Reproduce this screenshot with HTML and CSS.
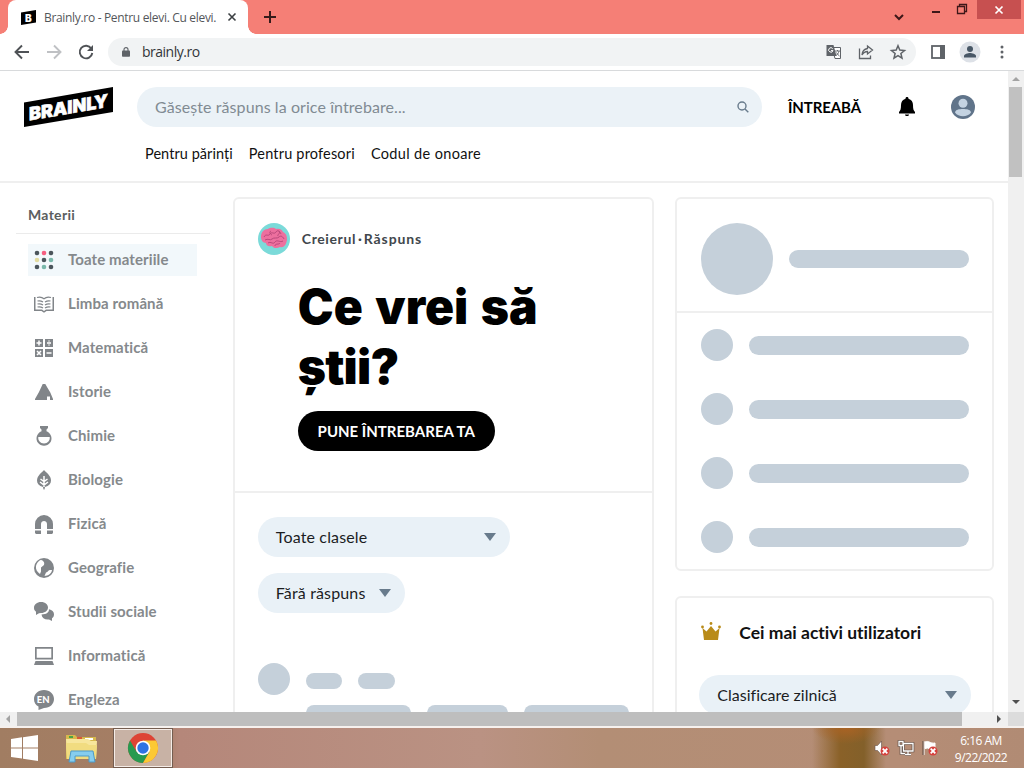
FILE: index.html
```html
<!DOCTYPE html>
<html lang="ro">
<head>
    <meta charset="UTF-8">
    <meta name="viewport" content="width=device-width, initial-scale=1.0">
    <title>Brainly.ro - Pentru elevi. Cu elevi.</title>
    <link rel="stylesheet" href="styles.css">
</head>
<body>
    <div class="tab-strip">
        <div class="tab">
            <svg class="favicon" viewBox="0 0 15 15"><path d="M0 2.5 15 0v12.5L0 15z"/><text x="4" y="11.5">B</text></svg>
            <span class="tab-title">Brainly.ro - Pentru elevi. Cu elevi.</span>
            <svg class="tab-close" viewBox="0 0 8 8"><path d="M.5.5l7 7M7.5.5l-7 7"/></svg>
        </div>
        <svg class="new-tab" viewBox="0 0 12 12"><path d="M6 0v12M0 6h12"/></svg>
        <div class="window-controls">
            <svg class="tab-search" viewBox="0 0 10 6"><path d="M1 1l4 4 4-4"/></svg>
            <span class="minimize"></span>
            <svg class="restore" viewBox="0 0 10 10"><path d="M.5 2.5h7v7h-7zM2.5 2.500V.5h7v7h-2"/></svg>
            <div class="window-close"><svg viewBox="0 0 8 8"><path d="M.5.5l7 7M7.5.5l-7 7"/></svg></div>
        </div>
    </div>

    <div class="toolbar">
        <div class="nav-buttons">
            <svg viewBox="0 0 16 16"><path d="M15 8H2M8 1.500L1.500 8 8 14.500"/></svg>
            <svg class="disabled" viewBox="0 0 16 16"><path d="M1 8h13M8 1.500L14.500 8 8 14.500"/></svg>
            <svg viewBox="0 0 16 16"><path d="M13.300 4.500A6.300 6.300 0 1 0 14.300 9"/><path class="solid" d="M15 1v6H9z"/></svg>
        </div>
        <div class="address-bar">
            <svg class="lock" viewBox="0 0 10 12"><rect y="4" width="10" height="8" rx="1"/><path d="M2.500 5V3a2.500 2.500 0 0 1 5 0v2"/></svg>
            <span class="address">brainly.ro</span>
            <div class="address-actions">
                <svg class="translate" viewBox="0 0 16 16"><path d="M6 3.500h8.500v11H9z" fill="#fff" stroke="#5f6368"/><path d="M.5 1h7l3 11H.5z" fill="#5f6368"/><path d="M6.700 4.700A2.200 2.200 0 1 0 7 6.600H5" fill="none" stroke="#fff"/><path d="M9 7h5M11.500 6v1M13 7c-.5 2.500-2 4-3 4.500M10.500 8.500c.6 1.500 2 2.800 3 3.500" fill="none" stroke="#5f6368" stroke-width=".9"/></svg>
                <svg class="share" viewBox="0 0 16 16"><path d="M1.500 4.500v10h11v-3M9.500 2l5 4-5 4V7.500C7 7.500 5.500 8.500 4 11c.3-4 2.500-6 5.500-6.500z"/></svg>
                <svg class="star" viewBox="0 0 16 16"><path d="M8 1.800l1.800 4.300 4.700.4-3.600 3 1.100 4.600-4-2.500-4 2.500 1.100-4.600-3.600-3 4.700-.4z"/></svg>
            </div>
        </div>
        <svg class="side-panel" viewBox="0 0 14 14"><rect x="1" y="1" width="12" height="12"/><path d="M9 0h5v14H9z"/></svg>
        <svg class="profile" viewBox="0 0 20 20"><circle class="back" cx="10" cy="10" r="10.500"/><circle cx="10" cy="7" r="3"/><path d="M4 15.500v-1.500c0-2 4-3 6-3s6 1 6 3v1.500z"/></svg>
        <svg class="more" viewBox="0 0 4 14"><circle cx="2" cy="2" r="1.500"/><circle cx="2" cy="7" r="1.500"/><circle cx="2" cy="12" r="1.500"/></svg>
    </div>

    <div class="viewport">
        <div class="page">
            <header class="header">
                <div class="header-top">
                    <svg class="logo" viewBox="0 0 89 40"><path d="M0 15.500 89 0v25L0 40z"/><text x="5" y="34.500" transform="matrix(1 -.174 0 1 0 0)" textLength="79" lengthAdjust="spacingAndGlyphs">BRAINLY</text></svg>
                    <div class="search">
                        <span>Găsește răspuns la orice întrebare...</span>
                        <svg viewBox="0 0 12 12"><circle cx="5" cy="5" r="4"/><path d="M8 8l3.300 3.300"/></svg>
                    </div>
                    <span class="ask-link">ÎNTREABĂ</span>
                    <svg class="bell" viewBox="0 0 16 20"><path d="M8 0c1 0 1.500.7 1.500 1.700C12.500 2.500 14 5 14 8c0 4 .5 5.500 2 7v1.500H0V15c1.500-1.500 2-3 2-7 0-3 1.500-5.500 4.500-6.300C6.500.7 7 0 8 0zM6 17.500h4c0 2-4 2-4 0z"/></svg>
                    <svg class="avatar" viewBox="0 0 24 24"><circle cx="12" cy="12" r="12" fill="#60748a"/><circle cx="12" cy="8.300" r="4.500" fill="#c4d3e2"/><path d="M4 17.500C4.500 14.500 8 14 12 14s7.500.5 8 3.500c-3.500 5-12.500 5-16 0z" fill="#c4d3e2"/></svg>
                </div>
                <nav class="header-links">
                    <a>Pentru părinți</a>
                    <a>Pentru profesori</a>
                    <a>Codul de onoare</a>
                </nav>
            </header>

            <main class="content">
                <aside class="sidebar">
                    <h2>Materii</h2>
                    <ul class="subjects">
                        <li class="active">
                            <svg viewBox="0 0 20 20"><g fill="#4b555b"><circle cx="3" cy="3" r="2.300"/><circle cx="17" cy="3" r="2.300"/><circle cx="10" cy="10" r="2.300"/><circle cx="3" cy="17" r="2.300"/><circle cx="17" cy="17" r="2.300"/></g><circle cx="10" cy="3" r="2.300" fill="#f55f80"/><circle cx="3" cy="10" r="2.300" fill="#e3dca0"/><g fill="#7ab8ab"><circle cx="17" cy="10" r="2.300"/><circle cx="10" cy="17" r="2.300"/></g></svg>
                            <span>Toate materiile</span>
                        </li>
                        <li>
                            <svg viewBox="0 0 20 20"><path d="M0 3h1.500v12.500H8l2 1.500 2-1.500h6.500V3H20v14h-7.500L10 18.700 7.500 17H0z"/><path class="line" d="M3 3.500c3-1 5-.5 7 1.200 2-1.700 4-2.200 7-1.200M3.500 7c2-.5 4 0 5.500 1M3.500 10c2-.5 4 0 5.500 1M3.500 13c2-.5 4 0 5.500 1M16.500 7c-2-.5-4 0-5.500 1M16.500 10c-2-.5-4 0-5.500 1M16.500 13c-2-.5-4 0-5.500 1"/></svg>
                            <span>Limba română</span>
                        </li>
                        <li>
                            <svg viewBox="0 0 20 20"><path d="M1 1h8v8H1zM11 1h8v8h-8zM1 11h8v8H1zM11 11h8v8h-8z"/><path class="cut" d="M5 2.500v5M2.500 5h5M3 13l4 4M7 13l-4 4M12.500 15h5M13 5h4M15 2.500v1M15 6.500v1"/></svg>
                            <span>Matematică</span>
                        </li>
                        <li>
                            <svg viewBox="0 0 20 20"><path d="M8.700 2h2.600l2 3.500 3 5 2.700 6.500v1h-3v-3.500h-3V18H1v-1l4-7z"/></svg>
                            <span>Istorie</span>
                        </li>
                        <li>
                            <svg viewBox="0 0 20 20"><path d="M6 0h8v2l-1.500 1.500v1.800a7.500 7.500 0 1 1-5 0V3.500L6 2z"/><path class="hole" d="M4.300 11h11.400c.5 3.500-2 6.500-5.700 6.500S3.800 14.500 4.300 11z"/></svg>
                            <span>Chimie</span>
                        </li>
                        <li>
                            <svg viewBox="0 0 20 20"><path d="M10 0c2 2.500 7 5.500 7 10.500 0 3-2 5.500-6 6.500l-.5 2.500h-1L9 17c-4-1-6-3.500-6-6.500C3 5.500 8 2.500 10 0z"/><path class="cut" d="M10 6v11M6.500 9l3.500 2.500L13.500 9M6 12l4 3 4-3"/></svg>
                            <span>Biologie</span>
                        </li>
                        <li>
                            <svg viewBox="0 0 20 20"><path d="M1 15v-5a9 9 0 0 1 18 0v5h-6v-5c0-4-6-4-6 0v5zM1 16.500h6V20H2l-1-1zM13 16.500h6V19l-1 1h-5z"/></svg>
                            <span>Fizică</span>
                        </li>
                        <li>
                            <svg viewBox="0 0 20 20"><circle cx="10" cy="10" r="10"/><path class="hole" d="M7 1.700c2 1 4 2.300 3 5.300l-3 2.500v4l-1 2.500C3 14 1.500 11 2 8s2.500-5.300 5-6.300zM18 12c0 3-4 6-7.500 6l1.500-3.500c2-.5 2.500-2.500 4-2.500z"/></svg>
                            <span>Geografie</span>
                        </li>
                        <li>
                            <svg viewBox="0 0 20 20"><path d="M7 0c4.500 0 7 2.500 7 5.500S11 11 7 11l-2 .2L2 13v-3.200C.5 8.500 0 7.500 0 5.800 0 2.500 3 0 7 0z"/><path d="M15 7.300c3 .5 5 2.700 5 5 0 2-.7 3-2 4V19l-3-1.500c-4 .5-7-1.300-7.500-5 5 0 7.500-2 7.500-5.200z"/></svg>
                            <span>Studii sociale</span>
                        </li>
                        <li>
                            <svg viewBox="0 0 20 20"><path fill-rule="evenodd" d="M1 1h18v12.500H1zM2.700 2.700v9h14.600v-9zM1.500 15h17l1.500 4H0z"/></svg>
                            <span>Informatică</span>
                        </li>
                        <li>
                            <svg viewBox="0 0 20 20"><path d="M10 0c6 0 10 4 10 9s-4 9-10 9l-5.500 2v-3.500C1.500 15 0 12.500 0 9c0-5 4-9 10-9z"/><text x="2.800" y="12.900">EN</text></svg>
                            <span>Engleza</span>
                        </li>
                    </ul>
                </aside>

                <section class="card feed">
                    <div class="prompt">
                        <div class="prompt-author">
                            <svg class="brain" viewBox="0 0 32 32"><circle cx="16" cy="16" r="16" fill="#7bdad9"/><path d="M3 14c0-5 3-8 7-8 3-2 7-1 8 0 4-1 6 1 7 3 4 2 4 5 4 8-1 5-3 8-7 7-3 2-7 1-8-1-4 1-6-1-6-3-3 0-5-3-5-6z" fill="#ed6f9e"/><path d="M6 14c2-4 4 0 6-3s4 1 6-2 4 0 5 2M7 17c3-2 5 1 7-1s5 0 7-2 4 0 5 2M10 20c3-2 5 2 7-1s5 1 8-1M13 8c-2 1-1 3 1 4M21 8c2 3-2 3-1 5M17 23c0-3 4-1 5-3" fill="none" stroke="#b9487a" stroke-width="1"/></svg>
                            <span class="author-name">Creierul</span><span class="dot">·</span><span class="author-action">Răspuns</span>
                        </div>
                        <h1>Ce vrei să<br><span class="second-line">ştii?</span></h1>
                        <button>PUNE ÎNTREBAREA TA</button>
                    </div>
                    <div class="filters">
                        <div class="select select-class"><span>Toate clasele</span><i class="arrow"></i></div>
                        <div class="select select-answer"><span>Fără răspuns</span><i class="arrow"></i></div>
                    </div>
                    <div class="skeleton-question">
                        <i class="blank blank-avatar"></i>
                        <div class="skeleton-lines">
                            <div class="skeleton-row"><i class="blank w36"></i><i class="blank w37"></i></div>
                            <div class="skeleton-row second"><i class="blank w105"></i><i class="blank w81"></i><i class="blank w105"></i></div>
                        </div>
                    </div>
                </section>

                <aside class="right-column">
                    <div class="card skeleton-card">
                        <div class="skeleton-profile"><i class="blank blank-large"></i><i class="blank bar"></i></div>
                        <div class="skeleton-list">
                            <div class="skeleton-item"><i class="blank blank-avatar"></i><i class="blank bar"></i></div>
                            <div class="skeleton-item"><i class="blank blank-avatar"></i><i class="blank bar"></i></div>
                            <div class="skeleton-item"><i class="blank blank-avatar"></i><i class="blank bar"></i></div>
                            <div class="skeleton-item"><i class="blank blank-avatar"></i><i class="blank bar"></i></div>
                        </div>
                    </div>
                    <div class="card ranking">
                        <h3>
                            <svg viewBox="0 0 20 18"><path d="M1.500 6l4 3.500L10 4l4.500 5.500 4-3.500L17 18H3z"/><circle cx="1.500" cy="5" r="1.400"/><circle cx="10" cy="1.500" r="1.400"/><circle cx="18.500" cy="5" r="1.400"/></svg>
                            <span>Cei mai activi utilizatori</span>
                        </h3>
                        <div class="select select-ranking"><span>Clasificare zilnică</span><i class="arrow"></i></div>
                    </div>
                </aside>
            </main>
        </div>
        <div class="scroll-vertical"><i class="tri up"></i><i class="thumb"></i><i class="tri down"></i></div>
    </div>
    <div class="scroll-horizontal"><i class="tri left"></i><i class="thumb"></i><i class="tri right"></i><i class="corner"></i></div>

    <div class="taskbar">
        <svg class="start" viewBox="0 0 27 26"><path d="M0 4l11-1.700v10.200H0zM12 2.200 27 0v12.500H12zM0 13.500h11v10L0 22zM12 13.500h15V26l-15-2.200z"/></svg>
        <svg class="explorer" viewBox="0 0 34 29"><path d="M1 1h9l2 2h19v22H1z" fill="#d7b94d"/><path d="M4 2h4v2H4z" fill="#48a447"/><path d="M12 3h5v2h-5z" fill="#d85b36"/><path d="M20 4h8v2h-8z" fill="#fff"/><path d="M1 5h22l3 2h6l-1 18H2z" fill="#f7e69c"/><path d="M1 9h20l3 2h8l-1 14H2z" fill="#f1dc80"/><path d="M4 28l2-11h22l2 11h-6v-6H10v6z" fill="#86cdee" stroke="#4c9ac8"/></svg>
        <div class="task-active">
            <svg viewBox="0 0 30 30"><circle cx="15" cy="15" r="15" fill="#dd4435"/><path d="M2 7.500A15 15 0 0 0 15 30l6.500-11.300L15 15 8.500 18.800z" fill="#279a50"/><path d="M28 7.500H15V15l6.500 3.700L15 30A15 15 0 0 0 28 7.500z" fill="#fcc934"/><circle cx="15" cy="15" r="7.300" fill="#fff"/><circle cx="15" cy="15" r="5.700" fill="#2f73e3"/></svg>
        </div>
        <div class="tray">
            <svg viewBox="0 0 16 16"><path d="M1 5.500h2.500L7.500 1v14L3.500 10.500H1z" fill="#fff" stroke="#654f46" stroke-width=".6"/><circle cx="11" cy="11" r="4.500" fill="#d5423d"/><path d="M8.700 8.700l4.600 4.600M13.300 8.700l-4.600 4.600" stroke="#fff" stroke-width="1.800"/></svg>
            <svg viewBox="0 0 16 16"><path d="M5.500 3.500h9.500v7.500H5.500zM10 11v3M7 14.500h6M1 1.500h4v4H1zM3 5.500v8h4" fill="none" stroke="#584840" stroke-width="2.600"/><path d="M5.500 3.500h9.500v7.500H5.500zM10 11v3M7 14.500h6M1 1.500h4v4H1zM3 5.500v8h4" fill="none" stroke="#fff" stroke-width="1.300"/></svg>
            <svg viewBox="0 0 16 16"><path d="M2 1v14M3 2c4-2 5 2 10 1v6c-5 1-6-2-10-.5z" fill="#fff" stroke="#fff"/><path d="M1 1v14" stroke="#5d4940"/><circle cx="11" cy="11" r="4.500" fill="#d5423d"/><path d="M8.700 8.700l4.600 4.600M13.300 8.700l-4.600 4.600" stroke="#fff" stroke-width="1.800"/></svg>
        </div>
        <div class="clock"><span>6:16 AM</span><span>9/22/2022</span></div>
    </div>
</body>
</html>
```
FILE: styles.css
```css
* {
    box-sizing: border-box;
}

body {
    width: 1024px;
    height: 768px;
    margin: 0;
    overflow: hidden;
    display: flex;
    flex-direction: column;
    background: #fff;
    font-family: Lato, "Liberation Sans", sans-serif;
    font-size: 15px;
    font-variant-ligatures: none;
    color: #111;
}

svg {
    display: block;
    flex: none;
    overflow: visible;
}

i {
    display: block;
    flex: none;
}

span, a {
    white-space: nowrap;
}

/* Browser window */
.tab-strip {
    height: 34px;
    flex: none;
    display: flex;
    align-items: center;
    background: #f57f76;
}

.tab {
    width: 240px;
    height: 34px;
    margin-left: 8px;
    padding-left: 13px;
    display: flex;
    align-items: center;
    background: #fff;
    border-radius: 8px 8px 0 0;
    position: relative;
}

/* Outward curves at the foot of the tab */
.tab::before,
.tab::after {
    content: "";
    position: absolute;
    bottom: 0;
    width: 8px;
    height: 8px;
}

.tab::before {
    left: -8px;
    background: radial-gradient(circle at 0 0, transparent 7.5px, #fff 8px);
}

.tab::after {
    right: -8px;
    background: radial-gradient(circle at 100% 0, transparent 7.5px, #fff 8px);
}

.favicon {
    width: 15px;
    height: 15px;
}

.favicon text {
    fill: #fff;
    font: 900 10px Inter, sans-serif;
}

.tab-title {
    width: 178px;
    margin-left: 8px;
    font: 12px "Open Sans", sans-serif;
    letter-spacing: -0.32px;
    color: #53565a;
}

.tab-close {
    width: 8px;
    height: 8px;
    margin-left: 6px;
    stroke: #3c4043;
    stroke-width: 1.6;
}

.new-tab {
    width: 12px;
    height: 12px;
    margin-left: 16px;
    stroke: #351b1b;
    stroke-width: 2;
}

.window-controls {
    margin-left: auto;
    height: 34px;
    display: flex;
    align-items: flex-start;
}

.tab-search {
    width: 10px;
    height: 6px;
    margin: 14px 28px 0 0;
    fill: none;
    stroke: #3d1718;
    stroke-width: 2;
}

.minimize {
    width: 8px;
    height: 2px;
    margin: 11px 17px 0 0;
    background: #3d1718;
}

.restore {
    width: 10px;
    height: 10px;
    margin: 4px 10px 0 0;
    fill: none;
    stroke: #3d1718;
    stroke-width: 1.3;
}

.window-close {
    width: 44px;
    height: 19px;
    margin-right: 3px;
    display: flex;
    align-items: center;
    justify-content: center;
    background: #c75050;
}

.window-close svg {
    width: 8px;
    height: 8px;
    stroke: #fff;
    stroke-width: 1.7;
}

.toolbar {
    height: 37px;
    flex: none;
    padding-left: 14px;
    display: flex;
    align-items: center;
    border-bottom: 1px solid #d8dadc;
}

.nav-buttons {
    display: flex;
    gap: 16px;
}

.nav-buttons svg {
    width: 16px;
    height: 16px;
    fill: none;
    stroke: #4f5256;
    stroke-width: 1.9;
}

.nav-buttons .disabled {
    stroke: #bfc1c4;
}

.nav-buttons .solid {
    fill: #4f5256;
    stroke: none;
}

.address-bar {
    width: 808px;
    height: 28px;
    margin-left: 14px;
    padding-left: 14px;
    display: flex;
    align-items: center;
    background: #f1f3f4;
    border-radius: 14px;
}

.lock {
    width: 8px;
    height: 12px;
    fill: #5f6368;
}

.lock path {
    fill: none;
    stroke: #5f6368;
    stroke-width: 1.4;
}

.address {
    margin-left: 12px;
    font: 14px/20px "Open Sans", sans-serif;
    letter-spacing: -0.5px;
    color: #333639;
}

.address-actions {
    margin: 0 10px 0 auto;
    display: flex;
    gap: 16px;
}

.address-actions svg {
    width: 16px;
    height: 16px;
}

.share,
.star {
    fill: none;
    stroke: #5f6368;
    stroke-width: 1.3;
}

.star {
    stroke-width: 1.5;
}

.side-panel {
    width: 14px;
    height: 14px;
    margin-left: 15px;
    fill: #5f6368;
}

.side-panel rect {
    fill: none;
    stroke: #5f6368;
    stroke-width: 1.8;
}

.profile {
    width: 20px;
    height: 20px;
    margin-left: 15px;
    fill: #485766;
}

.profile .back {
    fill: #dde1e7;
}

.more {
    width: 4px;
    height: 14px;
    margin-left: 20px;
    fill: #5f6368;
}

.viewport {
    height: 641px;
    flex: none;
    display: flex;
}

.page {
    width: 1008px;
    overflow: hidden;
}

/* Site header */
.header {
    height: 112px;
    border-bottom: 2px solid #efefef;
}

.header-top {
    height: 72px;
    padding: 0 33px 0 24px;
    display: flex;
    align-items: center;
}

.logo {
    width: 89px;
    height: 40px;
}

.logo text {
    fill: #fff;
    stroke: #fff;
    stroke-width: 0.6;
    font: 900 18px Inter, sans-serif;
}

.search {
    width: 625px;
    height: 40px;
    margin-left: 24px;
    padding: 0 13px 0 18px;
    display: flex;
    align-items: center;
    justify-content: space-between;
    background: #ebf2f7;
    border-radius: 20px;
    font-size: 16px;
    line-height: 18px;
    letter-spacing: 0.08px;
    color: #818b93;
}

.search span {
    padding-bottom: 1px;
}

.search svg {
    width: 12px;
    height: 12px;
    fill: none;
    stroke: #687b8c;
    stroke-width: 1.4;
}

.ask-link {
    width: 73px;
    margin-left: 26px;
    font-size: 15px;
    font-weight: bold;
    letter-spacing: -0.1px;
    color: #000;
}

.bell {
    width: 16px;
    height: 20px;
    margin-left: 38px;
}

.avatar {
    width: 24px;
    height: 24px;
    margin-left: auto;
}

.header-links {
    padding: 1px 0 0 145px;
    display: flex;
    gap: 16px;
    font-size: 14.5px;
    line-height: 20px;
    letter-spacing: 0.06px;
}

.header-links a:nth-child(2) {
    letter-spacing: 0.18px;
}

.header-links a:nth-child(3) {
    letter-spacing: 0.35px;
}

/* Three columns */
.content {
    display: flex;
    align-items: flex-start;
    padding: 14px 14px 0 16px;
}

.sidebar {
    width: 194px;
    margin-right: 23px;
}

.sidebar h2 {
    height: 37px;
    margin: 0;
    padding-left: 12px;
    border-bottom: 1px solid #ebebeb;
    font-size: 14px;
    line-height: 36px;
    letter-spacing: 0.3px;
    color: #5b5e60;
}

.subjects {
    margin: 0;
    padding: 10px 0 0 12px;
    list-style: none;
    display: flex;
    flex-direction: column;
    gap: 12px;
}

.subjects li {
    width: 169px;
    height: 32px;
    padding-left: 6px;
    display: flex;
    align-items: center;
    gap: 14px;
    font-weight: bold;
    letter-spacing: 0.1px;
    color: #85898c;
}

.subjects span {
    padding-bottom: 3px;
}

.subjects .active {
    background: #f2f8fb;
}

.subjects svg {
    width: 20px;
    height: 20px;
    margin-bottom: 1px;
    fill: #818589;
}

.subjects .line {
    fill: none;
    stroke: #818589;
    stroke-width: 1.2;
}

.subjects .cut {
    fill: none;
    stroke: #fff;
    stroke-width: 1.5;
}

.subjects .hole {
    fill: #fff;
}

.subjects text {
    fill: #fff;
    font: 900 9.5px Lato, sans-serif;
}

.card {
    background: #fff;
    border: 2px solid #efefef;
    border-radius: 6px;
}

.feed {
    width: 422px;
    height: 620px;
}

.prompt {
    height: 294px;
    padding: 24px 0 0 23px;
    border-bottom: 2px solid #efefef;
}

.prompt-author {
    display: flex;
    align-items: center;
    font-size: 14px;
    font-weight: bold;
    color: #41474c;
}

.prompt-author span {
    padding-bottom: 2px;
}

.brain {
    width: 32px;
    height: 32px;
    margin-right: 12px;
}

.author-name {
    width: 54px;
    letter-spacing: 0.6px;
}

.author-action {
    letter-spacing: 0.9px;
}

.dot {
    width: 8px;
    text-align: center;
}

h1 {
    margin: 22px 0 14px 40px;
    font: 900 48px/60px Inter, sans-serif;
    word-spacing: 3px;
    color: #000;
}

.second-line {
    letter-spacing: -0.8px;
}

button {
    width: 197px;
    height: 40px;
    margin-left: 40px;
    padding: 0;
    border: none;
    border-radius: 20px;
    background: #000;
    color: #fff;
    font: bold 15px Lato, sans-serif;
    white-space: nowrap;
}

.filters {
    padding: 24px 0 0 23px;
    display: flex;
    flex-direction: column;
    gap: 16px;
}

.select {
    height: 40px;
    padding: 0 14px 0 18px;
    display: flex;
    align-items: center;
    justify-content: space-between;
    background: #e9f1f7;
    border-radius: 20px;
    font-size: 16px;
    letter-spacing: 0.15px;
    color: #1b1d1f;
}

.select span {
    padding-bottom: 2px;
}

.select-class {
    width: 252px;
}

.select-answer {
    width: 147px;
}

.select-ranking {
    letter-spacing: 0;
}

.arrow {
    border: 6.5px solid transparent;
    border-top: 8px solid #687b8c;
    border-bottom: 0;
}

.blank {
    height: 16px;
    border-radius: 10px;
    background: #c5d0da;
}

.skeleton-question {
    padding: 50px 0 0 23px;
    display: flex;
    gap: 16px;
}

.blank-avatar {
    width: 32px;
    height: 32px;
    border-radius: 50%;
}

.skeleton-lines {
    padding-top: 10px;
}

.skeleton-row {
    display: flex;
    gap: 16px;
}

.skeleton-row.second {
    margin-top: 16px;
}

.w36 {
    width: 36px;
}

.w37 {
    width: 37px;
}

.w81 {
    width: 81px;
}

.w105 {
    width: 105px;
}

.right-column {
    width: 319px;
    margin-left: 21px;
}

.skeleton-card {
    height: 374px;
}

.skeleton-profile {
    height: 114px;
    padding: 24px 23px 0 24px;
    display: flex;
    gap: 16px;
    border-bottom: 2px solid #efefef;
}

.blank-large {
    width: 72px;
    height: 72px;
    border-radius: 50%;
}

.bar {
    flex: 1;
    height: 19px;
}

.skeleton-profile .bar {
    height: 18px;
    margin-top: 27px;
}

.skeleton-list {
    padding: 16px 23px 16px 24px;
    display: flex;
    flex-direction: column;
    gap: 32px;
}

.skeleton-item {
    display: flex;
    align-items: center;
    gap: 16px;
}

.ranking {
    height: 250px;
    margin-top: 25px;
    padding: 22px 21px 0 22px;
}

.ranking h3 {
    height: 24px;
    margin: 0 0 31px;
    padding-left: 2px;
    display: flex;
    align-items: center;
    gap: 18px;
    font-size: 17.5px;
    color: #111;
}

.ranking h3 span {
    padding-top: 1px;
}

.ranking h3 svg {
    width: 20px;
    height: 18px;
    margin-bottom: 2px;
    fill: #b98b19;
}

/* Scrollbars */
.scroll-vertical {
    width: 16px;
    display: flex;
    flex-direction: column;
    align-items: center;
    background: #f0f0f0;
}

.tri {
    width: 0;
    height: 0;
    border: 4px solid transparent;
}

.up {
    margin-top: 6px;
    border-top: 0;
    border-bottom-color: #a3a3a3;
}

.scroll-vertical .thumb {
    width: 13px;
    height: 90px;
    margin: 6px 1px 0 0;
    background: #c1c1c1;
}

.down {
    margin: auto 0 8px;
    border-bottom: 0;
    border-top-color: #505050;
}

.scroll-horizontal {
    height: 16px;
    flex: none;
    display: flex;
    align-items: center;
    background: #f0f0f0;
    border-bottom: 2px solid #f6f1ee;
}

.left {
    margin-left: 6px;
    border-left: 0;
    border-right-color: #a3a3a3;
}

.scroll-horizontal .thumb {
    width: 945px;
    height: 14px;
    margin-left: 7px;
    background: #bebebe;
}

.right {
    margin-left: 35px;
    border-right: 0;
    border-left-color: #505050;
}

.corner {
    width: 16px;
    height: 14px;
    margin-left: auto;
    background: #dcdcdc;
}

/* Desktop taskbar */
.taskbar {
    height: 40px;
    flex: none;
    padding-left: 11px;
    display: flex;
    align-items: center;
    background: radial-gradient(ellipse 34px 16px at 846px 0, #a96324, transparent), linear-gradient(90deg, transparent 812px, #8a6128 840px, #83602a 864px, transparent 886px), linear-gradient(90deg, #a17d62, #a67e65 160px, #b5877a 180px, #ba9283 480px, #b38e75 600px, #b58d76 900px, #b18b74);
}

.start {
    width: 27px;
    height: 26px;
    fill: #fff;
}

.explorer {
    width: 34px;
    height: 29px;
    margin-left: 27px;
}

.task-active {
    width: 60px;
    height: 40px;
    margin-left: 14px;
    display: flex;
    align-items: center;
    justify-content: center;
    background: #c8b2a5;
    border: 1px solid #745d50;
    box-shadow: inset 0 0 0 1px #f5ece7;
}

.task-active svg {
    width: 30px;
    height: 30px;
}

.tray {
    margin-left: auto;
    display: flex;
    gap: 8px;
}

.tray svg {
    width: 16px;
    height: 16px;
}

.clock {
    width: 54px;
    margin: 0 16px;
    padding-top: 2px;
    display: flex;
    flex-direction: column;
    align-items: center;
    font: 12px/17px "Open Sans", sans-serif;
    letter-spacing: -0.5px;
    color: #fff;
}
```
